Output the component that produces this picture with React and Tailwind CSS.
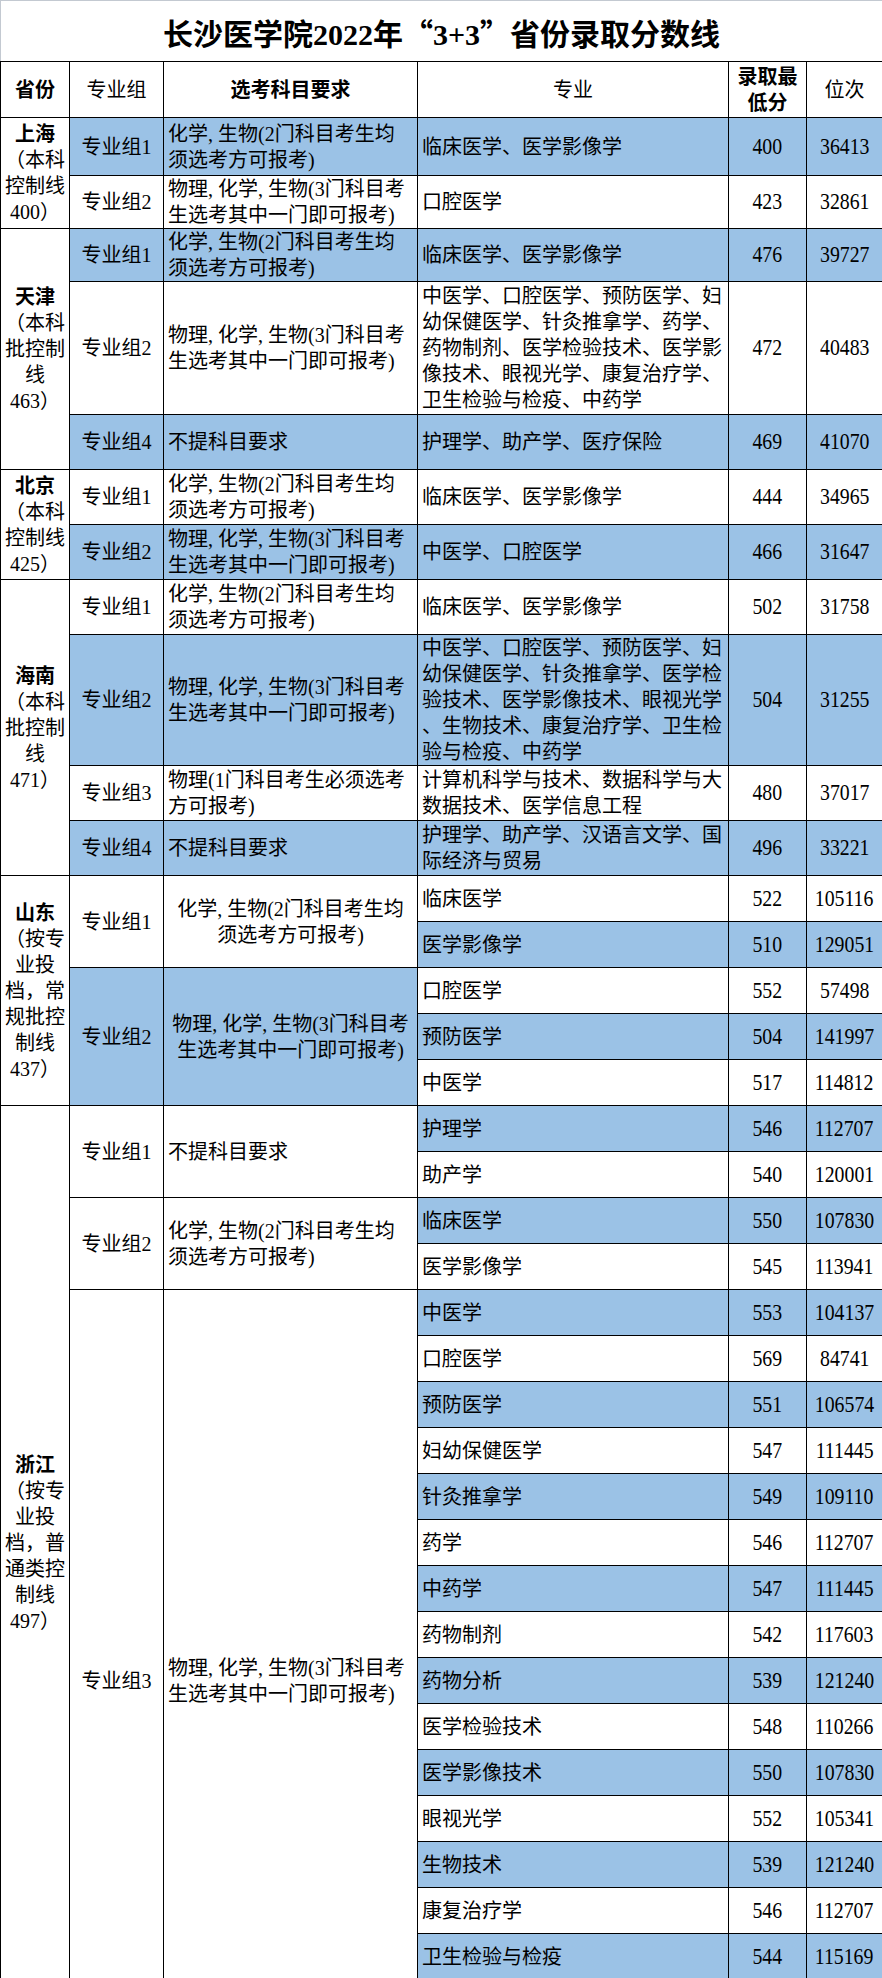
const BLUE = 'bg-[#9bc2e6]';
const base = 'border border-black p-0 leading-[26px] text-[20px] text-black';
const prov = `${base} text-center align-middle`;
const grp = `${base} text-center align-middle text-[#222]`;
const req = `${base} text-left align-middle pl-[4px] pr-[2px]`;
const reqC = `${base} text-center align-middle`;
const maj = `${base} text-left align-middle pl-[4px] pr-[2px]`;
const num = `${base} text-center align-middle`;

const REQ2 = ['化学, 生物(2门科目考生均', '须选考方可报考)'];
const REQ3 = ['物理, 化学, 生物(3门科目考', '生选考其中一门即可报考)'];

function Lines({ lines }) {
  return lines.map((l, i) => (
    <div key={i} className="whitespace-nowrap">
      {l}
    </div>
  ));
}

function Prov({ name, lines }) {
  return (
    <>
      <div className="font-bold">{name}</div>
      <Lines lines={lines} />
    </>
  );
}

// condensed tall digits like the spreadsheet font
function Num({ children }) {
  return <span className="inline-block scale-x-[0.86] text-[23px] leading-[26px]">{children}</span>;
}

function Cells({ major, score, rank, blue }) {
  const b = blue ? ` ${BLUE}` : '';
  return (
    <>
      <td className={maj + b}>{Array.isArray(major) ? <Lines lines={major} /> : major}</td>
      <td className={num + b}><Num>{score}</Num></td>
      <td className={num + b}><Num>{rank}</Num></td>
    </>
  );
}

const zj3 = [
  ['中医学', 553, 104137],
  ['口腔医学', 569, 84741],
  ['预防医学', 551, 106574],
  ['妇幼保健医学', 547, 111445],
  ['针灸推拿学', 549, 109110],
  ['药学', 546, 112707],
  ['中药学', 547, 111445],
  ['药物制剂', 542, 117603],
  ['药物分析', 539, 121240],
  ['医学检验技术', 548, 110266],
  ['医学影像技术', 550, 107830],
  ['眼视光学', 552, 105341],
  ['生物技术', 539, 121240],
  ['康复治疗学', 546, 112707],
  ['卫生检验与检疫', 544, 115169],
];

export default function App() {
  return (
    <div className="w-[882px] bg-white font-['Liberation_Serif','Noto_Sans_CJK_SC',serif]">
      <table className="w-[882px] table-fixed border-collapse">
        <colgroup>
          <col className="w-[69px]" />
          <col className="w-[94px]" />
          <col className="w-[254px]" />
          <col className="w-[311px]" />
          <col className="w-[78px]" />
          <col className="w-[76px]" />
        </colgroup>
        <tbody>
          <tr className="h-[61px]">
            <td
              colSpan={6}
              className="border border-[#c3c9d1] border-b-black p-0 pt-[4px] text-center align-middle text-[30px] font-bold text-black"
            >
              长沙医学院2022年<span className="font-['Noto_Sans_CJK_SC',sans-serif]">“</span>3+3
              <span className="font-['Noto_Sans_CJK_SC',sans-serif]">”</span>省份录取分数线
            </td>
          </tr>
          <tr className="h-[56px]">
            <td className={`${prov} font-bold`}>省份</td>
            <td className={grp}>专业组</td>
            <td className={`${num} font-bold`}>选考科目要求</td>
            <td className={num}>专业</td>
            <td className={`${num} font-bold`}>
              <div>录取最</div>
              <div>低分</div>
            </td>
            <td className={num}>位次</td>
          </tr>

          {/* 上海 */}
          <tr className="h-[58px]">
            <td rowSpan={2} className={prov}>
              <Prov name="上海" lines={['（本科', '控制线', '400）']} />
            </td>
            <td className={`${grp} ${BLUE}`}>专业组1</td>
            <td className={`${req} ${BLUE}`}><Lines lines={REQ2} /></td>
            <Cells major="临床医学、医学影像学" score={400} rank={36413} blue />
          </tr>
          <tr className="h-[53px]">
            <td className={grp}>专业组2</td>
            <td className={req}><Lines lines={REQ3} /></td>
            <Cells major="口腔医学" score={423} rank={32861} />
          </tr>

          {/* 天津 */}
          <tr className="h-[52px]">
            <td rowSpan={3} className={prov}>
              <Prov name="天津" lines={['（本科', '批控制', '线', '463）']} />
            </td>
            <td className={`${grp} ${BLUE}`}>专业组1</td>
            <td className={`${req} ${BLUE}`}><Lines lines={REQ2} /></td>
            <Cells major="临床医学、医学影像学" score={476} rank={39727} blue />
          </tr>
          <tr className="h-[133px]">
            <td className={grp}>专业组2</td>
            <td className={req}><Lines lines={REQ3} /></td>
            <Cells
              major={[
                '中医学、口腔医学、预防医学、妇',
                '幼保健医学、针灸推拿学、药学、',
                '药物制剂、医学检验技术、医学影',
                '像技术、眼视光学、康复治疗学、',
                '卫生检验与检疫、中药学',
              ]}
              score={472}
              rank={40483}
            />
          </tr>
          <tr className="h-[55px]">
            <td className={`${grp} ${BLUE}`}>专业组4</td>
            <td className={`${req} ${BLUE}`}>不提科目要求</td>
            <Cells major="护理学、助产学、医疗保险" score={469} rank={41070} blue />
          </tr>

          {/* 北京 */}
          <tr className="h-[55px]">
            <td rowSpan={2} className={prov}>
              <Prov name="北京" lines={['（本科', '控制线', '425）']} />
            </td>
            <td className={grp}>专业组1</td>
            <td className={req}><Lines lines={REQ2} /></td>
            <Cells major="临床医学、医学影像学" score={444} rank={34965} />
          </tr>
          <tr className="h-[55px]">
            <td className={`${grp} ${BLUE}`}>专业组2</td>
            <td className={`${req} ${BLUE}`}><Lines lines={REQ3} /></td>
            <Cells major="中医学、口腔医学" score={466} rank={31647} blue />
          </tr>

          {/* 海南 */}
          <tr className="h-[55px]">
            <td rowSpan={4} className={prov}>
              <Prov name="海南" lines={['（本科', '批控制', '线', '471）']} />
            </td>
            <td className={grp}>专业组1</td>
            <td className={req}><Lines lines={REQ2} /></td>
            <Cells major="临床医学、医学影像学" score={502} rank={31758} />
          </tr>
          <tr className="h-[131px]">
            <td className={`${grp} ${BLUE}`}>专业组2</td>
            <td className={`${req} ${BLUE}`}><Lines lines={REQ3} /></td>
            <Cells
              major={[
                '中医学、口腔医学、预防医学、妇',
                '幼保健医学、针灸推拿学、医学检',
                '验技术、医学影像技术、眼视光学',
                '、生物技术、康复治疗学、卫生检',
                '验与检疫、中药学',
              ]}
              score={504}
              rank={31255}
              blue
            />
          </tr>
          <tr className="h-[55px]">
            <td className={grp}>专业组3</td>
            <td className={req}><Lines lines={['物理(1门科目考生必须选考', '方可报考)']} /></td>
            <Cells
              major={['计算机科学与技术、数据科学与大', '数据技术、医学信息工程']}
              score={480}
              rank={37017}
            />
          </tr>
          <tr className="h-[55px]">
            <td className={`${grp} ${BLUE}`}>专业组4</td>
            <td className={`${req} ${BLUE}`}>不提科目要求</td>
            <Cells
              major={['护理学、助产学、汉语言文学、国', '际经济与贸易']}
              score={496}
              rank={33221}
              blue
            />
          </tr>

          {/* 山东 */}
          <tr className="h-[46px]">
            <td rowSpan={5} className={prov}>
              <Prov name="山东" lines={['（按专', '业投', '档，常', '规批控', '制线', '437）']} />
            </td>
            <td rowSpan={2} className={grp}>专业组1</td>
            <td rowSpan={2} className={reqC}><Lines lines={REQ2} /></td>
            <Cells major="临床医学" score={522} rank={105116} />
          </tr>
          <tr className="h-[46px]">
            <Cells major="医学影像学" score={510} rank={129051} blue />
          </tr>
          <tr className="h-[46px]">
            <td rowSpan={3} className={`${grp} ${BLUE}`}>专业组2</td>
            <td rowSpan={3} className={`${reqC} ${BLUE}`}><Lines lines={REQ3} /></td>
            <Cells major="口腔医学" score={552} rank={57498} />
          </tr>
          <tr className="h-[46px]">
            <Cells major="预防医学" score={504} rank={141997} blue />
          </tr>
          <tr className="h-[46px]">
            <Cells major="中医学" score={517} rank={114812} />
          </tr>

          {/* 浙江 */}
          <tr className="h-[46px]">
            <td rowSpan={19} className={prov}>
              <Prov name="浙江" lines={['（按专', '业投', '档，普', '通类控', '制线', '497）']} />
            </td>
            <td rowSpan={2} className={grp}>专业组1</td>
            <td rowSpan={2} className={req}>不提科目要求</td>
            <Cells major="护理学" score={546} rank={112707} blue />
          </tr>
          <tr className="h-[46px]">
            <Cells major="助产学" score={540} rank={120001} />
          </tr>
          <tr className="h-[46px]">
            <td rowSpan={2} className={grp}>专业组2</td>
            <td rowSpan={2} className={req}><Lines lines={REQ2} /></td>
            <Cells major="临床医学" score={550} rank={107830} blue />
          </tr>
          <tr className="h-[46px]">
            <Cells major="医学影像学" score={545} rank={113941} />
          </tr>
          {zj3.map(([m, s, r], i) => (
            <tr key={m} className="h-[46px]">
              {i === 0 && (
                <>
                  <td rowSpan={15} className={`${grp} pt-[92px]`}>专业组3</td>
                  <td rowSpan={15} className={`${req} pt-[92px]`}><Lines lines={REQ3} /></td>
                </>
              )}
              <Cells major={m} score={s} rank={r} blue={i % 2 === 0} />
            </tr>
          ))}
        </tbody>
      </table>
    </div>
  );
}
